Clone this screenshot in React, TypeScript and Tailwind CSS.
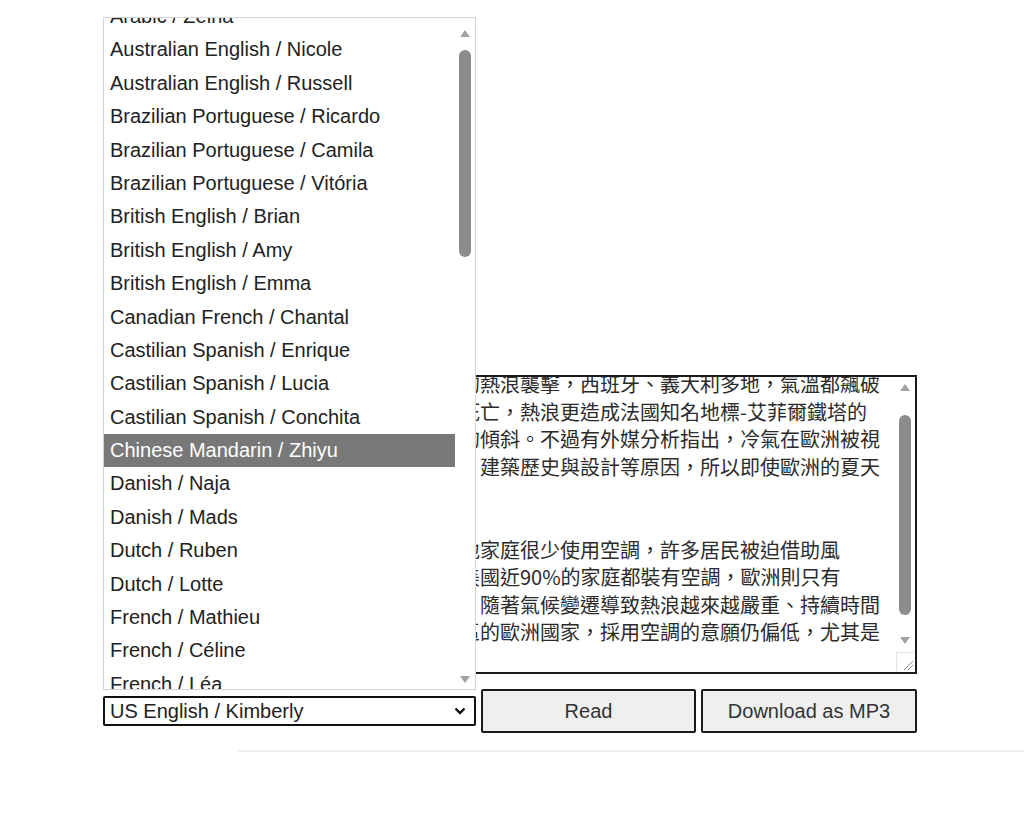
import React from "react"

const voices = [
  "Arabic / Zeina",
  "Australian English / Nicole",
  "Australian English / Russell",
  "Brazilian Portuguese / Ricardo",
  "Brazilian Portuguese / Camila",
  "Brazilian Portuguese / Vitória",
  "British English / Brian",
  "British English / Amy",
  "British English / Emma",
  "Canadian French / Chantal",
  "Castilian Spanish / Enrique",
  "Castilian Spanish / Lucia",
  "Castilian Spanish / Conchita",
  "Chinese Mandarin / Zhiyu",
  "Danish / Naja",
  "Danish / Mads",
  "Dutch / Ruben",
  "Dutch / Lotte",
  "French / Mathieu",
  "French / Céline",
  "French / Léa",
  "German / Hans",
]

const lines = [
  "今年夏季，歐洲多國接連遭受史無前例的熱浪襲擊，西班牙、義大利多地，氣溫都飆破",
  "高溫已在各地導致上千名民眾因中暑而死亡，熱浪更造成法國知名地標-艾菲爾鐵塔的",
  "頂端因鋼鐵結構受熱膨脹，而出現輕微的傾斜。不過有外媒分析指出，冷氣在歐洲被視",
  "為奢侈品，加上電費太高、氣候較涼爽、建築歷史與設計等原因，所以即使歐洲的夏天",
  "越來越炎熱，冷氣仍然不普及。",
  "",
  "根據國際能源署的統計，歐洲大部分當地家庭很少使用空調，許多居民被迫借助風",
  "扇、冷水澡等方式來消暑。相比之下，美國近90%的家庭都裝有空調，歐洲則只有",
  "不到一成的家庭安裝冷氣。雖然近年來，隨著氣候變遷導致熱浪越來越嚴重、持續時間",
  "拉長，但許多位處高緯度、氣候涼爽地區的歐洲國家，採用空調的意願仍偏低，尤其是",
  "北歐與英國。",
]

function Arrow({ down = false }: { down?: boolean }) {
  return (
    <svg width="10" height="7" viewBox="0 0 10 7">
      {down ? (
        <polygon points="0,0 10,0 5,7" fill="#a3a3a3" />
      ) : (
        <polygon points="0,7 10,7 5,0" fill="#a3a3a3" />
      )}
    </svg>
  )
}

export default function App() {
  return (
    <div className="relative w-[1024px] h-[817px] overflow-hidden bg-white font-['Liberation_Sans',Arial,sans-serif]">
      <div className="pt-[375px] pl-[103px]">
        {/* text box */}
        <div className="flex w-[814px] h-[299px] border-2 border-[#1b1b1b] bg-white overflow-hidden">
          <div className="flex-1 overflow-hidden pl-[15px]">
            <div className="-mt-[7px] text-[20px] leading-[27.6px] text-[#2b2b2b] font-['Noto_Sans_CJK_TC','Noto_Sans_CJK_SC',sans-serif]">
              {lines.map((l, i) => (
                <div key={i} className="h-[27.6px] whitespace-pre">
                  {l}
                </div>
              ))}
            </div>
          </div>
          <div className="flex w-[20px] flex-col items-center">
            <div className="flex h-[20px] items-center justify-center">
              <Arrow />
            </div>
            <div className="h-[18px]" />
            <div className="h-[200px] w-[12px] rounded-full bg-[#8c8c8c]" />
            <div className="h-[15px]" />
            <div className="flex h-[20px] items-center justify-center">
              <Arrow down />
            </div>
            <div className="mt-[2px] h-[19px] w-[18px] border-t border-l border-[#e2e2e2]">
              <svg width="17" height="18" viewBox="0 0 17 18">
                <line x1="16" y1="8" x2="7" y2="17" stroke="#888" strokeWidth="1" />
                <line x1="16" y1="12" x2="11" y2="17" stroke="#888" strokeWidth="1" />
              </svg>
            </div>
          </div>
        </div>

        {/* controls */}
        <div className="mt-[15px] flex h-[44px] items-center gap-[5px]">
          <div className="flex h-[30px] w-[373px] items-center justify-between rounded-[2px] border-2 border-[#111] pl-[5px] pr-[8px] text-[20px] text-[#222]">
            <span>US English / Kimberly</span>
            <svg width="12" height="8" viewBox="0 0 12 8">
              <polyline points="1.5,1.5 6,6 10.5,1.5" fill="none" stroke="#111" strokeWidth="2.4" />
            </svg>
          </div>
          <button className="h-[44px] w-[215px] rounded-[2px] border-2 border-[#1b1b1b] bg-[#efefef] text-[20px] text-[#333]">
            Read
          </button>
          <button className="h-[44px] w-[216px] rounded-[2px] border-2 border-[#1b1b1b] bg-[#efefef] text-[20px] text-[#333]">
            Download as MP3
          </button>
        </div>

        <div className="mt-[17px] ml-[135px] h-[2px] w-[786px] bg-[#f1f1f1]" />
      </div>

      {/* open voice list */}
      <div className="absolute left-[103px] top-[17px] flex h-[673px] w-[373px] border border-[#d4d4d4] bg-white">
        <div className="flex-1 overflow-hidden">
          <div className="-mt-[18px]">
            {voices.map((v) => (
              <div
                key={v}
                className={
                  v === "Chinese Mandarin / Zhiyu"
                    ? "h-[33.4px] leading-[33.4px] pl-[6px] text-[20px] whitespace-nowrap bg-[#787878] text-white"
                    : "h-[33.4px] leading-[33.4px] pl-[6px] text-[20px] whitespace-nowrap text-[#222]"
                }
              >
                {v}
              </div>
            ))}
          </div>
        </div>
        <div className="flex w-[20px] flex-col items-center">
          <div className="flex h-[30px] items-center justify-center">
            <Arrow />
          </div>
          <div className="h-[2px]" />
          <div className="h-[207px] w-[12px] rounded-full bg-[#8c8c8c]" />
          <div className="flex-1" />
          <div className="flex h-[20px] items-center justify-center">
            <Arrow down />
          </div>
        </div>
      </div>
    </div>
  )
}
